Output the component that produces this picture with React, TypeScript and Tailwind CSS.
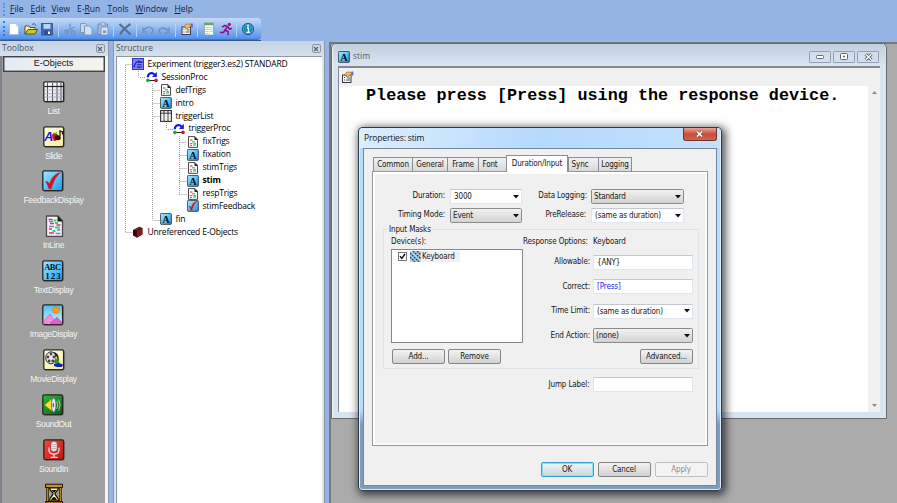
import React from "react";

type IconProps = { size?: number };

/* ---------- object icons ---------- */
function Frame({ fill, children, size = 22 }: { fill: string; children?: React.ReactNode; size?: number }) {
  return (
    <svg width={size} height={size} viewBox="0 0 22 22" className="block shrink-0">
      <defs>
        <linearGradient id="cyan" x1="0" y1="0" x2="1" y2="1"><stop offset="0" stopColor="#a5e8ff" /><stop offset="1" stopColor="#1b9df0" /></linearGradient>
        <linearGradient id="sky" x1="0" y1="0" x2="0" y2="1"><stop offset="0" stopColor="#49bdf2" /><stop offset="1" stopColor="#d8f4ff" /></linearGradient>
        <linearGradient id="cream" x1="0" y1="0" x2="1" y2="1"><stop offset="0" stopColor="#fffde0" /><stop offset="1" stopColor="#f6ef9c" /></linearGradient>
        <linearGradient id="green" x1="0" y1="0" x2="1" y2="1"><stop offset="0" stopColor="#37b53c" /><stop offset="1" stopColor="#0a5f12" /></linearGradient>
        <linearGradient id="red" x1="0" y1="0" x2="1" y2="1"><stop offset="0" stopColor="#f04a42" /><stop offset="1" stopColor="#c01414" /></linearGradient>
        <linearGradient id="pale" x1="0" y1="0" x2="1" y2="1"><stop offset="0" stopColor="#ffffff" /><stop offset="1" stopColor="#d9d9ee" /></linearGradient>
      </defs>
      <rect x="1" y="1" width="20.6" height="20.6" rx="2" fill="#444" opacity=".6" />
      <rect x="0.8" y="0.8" width="19.8" height="19.8" rx="1.6" fill={fill} stroke="#262626" strokeWidth="1.3" />
      {children}
    </svg>
  );
}
const ListIcon = ({ size }: IconProps) => (
  <Frame fill="url(#pale)" size={size}>
    <path d="M4.5 1.5v18.5M9.5 1.5v18.5M14 1.5v18.5M18 1.5v18.5" stroke="#444" strokeWidth=".9" />
    <path d="M1.5 5.5h18.5" stroke="#222" strokeWidth="1.2" />
    <path d="M1.5 9h18.5M1.5 12.5h18.5M1.5 16h18.5" stroke="#a7a7b8" strokeWidth=".8" />
  </Frame>
);
const SmallListIcon = () => (
  <svg width="12" height="12" viewBox="0 0 12 12" className="block shrink-0">
    <rect x=".6" y=".6" width="10.800" height="10.800" fill="#fff" stroke="#2e2e2e" strokeWidth="1.100" />
    <path d="M4 .6v10.800M8 .6v10.800M.6 3.200h10.800" stroke="#333" strokeWidth="1" />
    <path d="M.8 6h10.400M.8 8.700h10.400" stroke="#bbb" strokeWidth=".7" />
  </svg>
);
const SlideIcon = () => (
  <Frame fill="url(#cream)">
    <text x="1.2" y="15.200" fontSize="12.500" fontWeight="bold" fontStyle="italic" fill="#1616e0" fontFamily="Liberation Sans, sans-serif">A</text>
    <path d="M11 7.5c-1.6 0-2.2 1.4-1.8 3.2.3 1.800 1.300 4.300 2.600 4.300s3.500-1.500 3.500-4.200c0-2.500-1.800-3.400-3-2.800z" fill="#d8141c" />
    <path d="M10 6.500l2 1.200 1.500-2.200 0 3h-3z" fill="#119327" />
    <path d="M17 10V5l2.500 1v2.500" fill="none" stroke="#111" strokeWidth="1.200" />
    <ellipse cx="14.800" cy="11.800" rx="3" ry="2.500" fill="#3a0a0a" />
  </Frame>
);
const CheckIcon = ({ size }: IconProps) => (
  <Frame fill="url(#cyan)" size={size}>
    <path d="M3.500 11.500c1.500-.4 2.700.2 4 2.500C9.500 8 12.500 4 18.500 2.500 13.500 7 11.200 12 9.200 18.800H6.800C6 15.500 5 13.500 3.500 11.500z" fill="#e3101a" stroke="#a90d18" strokeWidth=".4" />
  </Frame>
);
const ScriptIcon = () => (
  <svg width="22" height="22" viewBox="0 0 22 22" className="block shrink-0">
    <path d="M3.500 1h11.500l4.500 5v15.500H3.500z" fill="#f4f2fb" stroke="#4a4a4a" strokeWidth="1.300" />
    <path d="M14.500 1l5.500 5.500h-5.500z" fill="#1a1a1a" />
    <path d="M5.500 4.500h4M7 8.500h4M13.500 10h4M6 14h3M6 18h5" stroke="#e0315e" strokeWidth="1.600" />
    <path d="M10.500 5.500h3M12 12.500h5M9.500 16h3M12 8h3" stroke="#35d458" strokeWidth="1.900" />
    <path d="M6 6.500h4M6 11.500h5M14 15h3.500M12.500 18.500h5" stroke="#7282d5" strokeWidth="1.300" />
  </svg>
);
const SmallScriptIcon = () => (
  <svg width="12" height="12" viewBox="0 0 12 12" className="block shrink-0">
    <path d="M1.500.6h6.500l2.500 2.700v8.100h-9z" fill="#fff" stroke="#4a4a4a" strokeWidth="1" />
    <path d="M7.500.4l3.500 3.500H7.500z" fill="#222" />
    <path d="M3 4h2.500M3 9.500h2" stroke="#e06a90" strokeWidth="1.400" />
    <path d="M5 5.800h3M6 9h3" stroke="#4fd274" strokeWidth="1.400" />
    <path d="M2.800 7.500h2.500M6.500 7.500h2.500" stroke="#7a85dc" strokeWidth="1.200" />
  </svg>
);
const TextIcon = () => (
  <Frame fill="url(#cyan)">
    <text x="2.200" y="10" fontSize="8.500" fontWeight="bold" textLength="17" fill="#07131c" fontFamily="Liberation Serif, serif">ABC</text>
    <text x="3.200" y="18.500" fontSize="9" fontWeight="bold" textLength="15.500" fill="#07131c" fontFamily="Liberation Serif, serif">123</text>
  </Frame>
);
const ImageIcon = () => (
  <Frame fill="url(#sky)">
    <circle cx="14" cy="6" r="3.300" fill="#ff9b1c" stroke="#e07000" strokeWidth=".6" />
    <path d="M1.600 19.800v-3L8 10l5.500 8z" fill="#f48be0" stroke="#b44aa8" strokeWidth=".5" />
    <path d="M8 19.800l7-6.500 5 5v1.500z" fill="#e25fd0" stroke="#a43a98" strokeWidth=".5" />
  </Frame>
);
const MovieIcon = () => (
  <Frame fill="url(#cream)">
    <ellipse cx="8" cy="8.800" rx="5.300" ry="6" fill="#e6e6e6" stroke="#333" strokeWidth="1" />
    {[[8, 5], [4.900, 8], [11, 8], [6.200, 12], [9.800, 12]].map(([x, y]) => (
      <circle key={`${x}-${y}`} cx={x} cy={y} r="1.400" fill="#444" />
    ))}
    <path d="M10.500 3c4 .5 5.500 4 5.500 9l-3 3-1.500-3c1.800-3 1.200-6-1-9z" fill="#222" />
    <path d="M12 9.500l3-1 1.500 5.500-4 1z" fill="#25a02d" />
    <path d="M11 15l5-1 4 1.500-1 2.500h-5L11 17z" fill="#1920b5" />
    <path d="M11.500 9l2.500-2v3z" fill="#e8cf29" />
  </Frame>
);
const SoundOutIcon = () => (
  <Frame fill="url(#green)">
    <path d="M2.500 11L10 4.800v12.400z" fill="#ffe32e" stroke="#7d7400" strokeWidth=".5" />
    <ellipse cx="11.700" cy="11" rx="2.300" ry="7" fill="#eeeef8" stroke="#5d5d80" strokeWidth=".8" />
    <ellipse cx="11.400" cy="11" rx=".9" ry="2.500" fill="#6b6ba2" />
    <path d="M14.800 7q2 4 0 8M16.700 5.500q2.800 5.500 0 11" fill="none" stroke="#a7d8ab" strokeWidth=".9" />
  </Frame>
);
const SoundInIcon = () => (
  <Frame fill="url(#red)">
    <rect x="8" y="2.500" width="6" height="10" rx="3" fill="#e9e9e9" stroke="#777" strokeWidth=".5" />
    <path d="M9 5.500h4M9 7.500h4M9 9.500h4" stroke="#999" strokeWidth=".6" />
    <path d="M6 8.500v2.500c0 5.500 10 5.500 10 0V8.500M11 15v3M7.500 18.400h7" fill="none" stroke="#ece4e4" strokeWidth="1.200" />
  </Frame>
);
const WaitIcon = () => (
  <svg width="22" height="22" viewBox="0 0 22 22" className="block">
    <path d="M4.500 3v16M17.500 3v16" stroke="#3a2200" strokeWidth="2.600" />
    <path d="M4.500 3v16M17.500 3v16" stroke="#b98016" strokeWidth="1" />
    <path d="M2.500 1.200h17v3.300h-17z" fill="#c98f22" stroke="#1d1305" />
    <path d="M6.500 4.800h9c0 3-3.500 4-3.500 6s3.500 3 3.500 7h-9c0-4 3.500-5 3.500-7s-3.500-3-3.500-6z" fill="#fff3a1" stroke="#1c1405" strokeWidth="1.300" />
    <path d="M8.500 7h5L11 10zM8 17c1-2 2-3 3-3s2 1 3 3z" fill="#111" />
    <path d="M2.500 18.500h17v2.500h-17z" fill="#a56e12" stroke="#1d1305" />
  </svg>
);
const AIcon = ({ size = 12 }: IconProps) => (
  <Frame fill="url(#cyan)" size={size}>
    <text x="11" y="17.500" textAnchor="middle" fontSize="19" fontWeight="bold" fill="#04121c" fontFamily="Liberation Serif, serif">A</text>
  </Frame>
);
const ProcIcon = () => (
  <svg width="12" height="12" viewBox="0 0 12 12" className="block shrink-0">
    <path d="M1.800 6.200C2 2 6 1 8.600 3.500" fill="none" stroke="#1515ef" strokeWidth="2.100" />
    <path d="M10.800 .8v5.200H6z" fill="#1515ef" />
    <path d="M2 9.500h8" stroke="#222" strokeWidth="1" />
    <circle cx="1.900" cy="9.400" r="1.800" fill="#13b51f" />
    <circle cx="10" cy="9.400" r="1.800" fill="#d3152a" />
  </svg>
);
const ExperimentIcon = () => (
  <svg width="12" height="12" viewBox="0 0 12 12" className="block shrink-0">
    <rect x=".5" y=".5" width="11" height="11" fill="#7d80ee" stroke="#3438c8" />
    <path d="M2 9.500c.5-3.500 2.500-6 5.500-6.500M6.500 4.800c1-1 3-1 4-.3M5.300 6.800h4.200M5 8.800c1.500.8 3.500.6 4.700-.4" fill="none" stroke="#1414b4" strokeWidth="1.100" />
  </svg>
);
const BookIcon = () => (
  <svg width="12" height="12" viewBox="0 0 12 12" className="block shrink-0">
    <path d="M1 4l6-3.300 3.500 1.300v6.500L5 11.800 1 9.500z" fill="#3b0508" />
    <path d="M4.800 4.500L10.200 2v6.500L5 11.300z" fill="#8c141a" />
    <path d="M2 4l5-2.700 1.800.6-4.500 2.300z" fill="#6b3a3a" />
  </svg>
);
const PropsIcon = ({ w = 13 }: { w?: number }) => (
  <svg width={w} height="12" viewBox="0 0 13 12" className="block shrink-0">
    <rect x="1.500" y="4" width="8.500" height="7.500" fill="#fafafa" stroke="#38384c" />
    <path d="M3 6.500h1M3 9h1M5 9h4M6.500 7h2.500" stroke="#4b4b5c" strokeWidth="1.200" />
    <path d="M3 4.500L6 1l4 .2 1 2-3 1.200-1 1.600-1.800.2.300-2z" fill="#f2bd63" stroke="#8a5a24" strokeWidth=".6" />
    <path d="M10.300 .5h2v4h-1.600z" fill="#6464c8" />
  </svg>
);

/* ---------- toolbar ---------- */
const Sep = () => <span className="mx-[3.750px] h-[16px] w-px shrink-0 bg-[#b9cfee]" />;
function Tool({ children }: { children: React.ReactNode }) {
  return <svg width="14" height="14" viewBox="0 0 14 14" className="block shrink-0">{children}</svg>;
}
const Group = ({ children }: { children: React.ReactNode }) => <div className="flex items-center gap-[2.500px]">{children}</div>;

function Toolbar() {
  return (
    <div className="flex h-[22px] w-[261px] items-center rounded-r-[4px] border-b border-[#4473b8] bg-linear-to-b from-[#c5daf6] via-[#8fb8f0] to-[#4f8fea] pl-[3px]">
      <span className="mr-[2px] h-[15px] border-l-2 border-dotted border-[#2f80dd]" />
      <Group>
        <Tool><path d="M2.500 1.500h6.500l2.500 3v8H2.500z" fill="#fff" stroke="#9fafc7" strokeWidth=".6" /><path d="M9 1.500v3h2.500z" fill="#ccd8ea" /></Tool>
        <Tool><path d="M1 12V4h4l1 1.500h5V8" fill="#fff59b" stroke="#555324" /><path d="M1 12l3-4.500h9.500L11 12z" fill="#c8c829" stroke="#555324" /><path d="M8 2.500c2-1.500 3.500-.5 4 1.200" fill="none" stroke="#333" strokeWidth=".7" /></Tool>
        <Tool><rect x="1.500" y="1.500" width="11" height="11.500" fill="#4168ba" stroke="#415a9a" /><path d="M3.500 2h7v4.800h-7z" fill="#bdd3f2" /><path d="M4 8.500h7V13H4z" fill="#344e8e" /><path d="M8 9.500h2V12H8z" fill="#fff" /></Tool>
      </Group>
      <Sep />
      <Group>
        <Tool><path d="M7 1.500v6.500M11.500 5L3 10" stroke="#7e96b8" strokeWidth="1.400" /><circle cx="3.500" cy="10" r="1.800" fill="none" stroke="#768fb3" strokeWidth="1.300" /><circle cx="10" cy="10.500" r="1.800" fill="none" stroke="#768fb3" strokeWidth="1.300" /></Tool>
        <Tool><path d="M1.500 1.500h5L9 4v6.500H1.500z" fill="#c0d5f3" stroke="#8098bd" /><path d="M5.500 4h5L13 6.500V13H5.500z" fill="#d3e0f4" stroke="#8098bd" /></Tool>
        <Tool><path d="M2 2h9.500v10.500H2z" fill="#9ebbe4" stroke="#748db4" /><path d="M5 .8h4v2.400H5z" fill="#d9e7f8" stroke="#748db4" strokeWidth=".7" /><path d="M5 5h7v8H5z" fill="#d3e0f4" stroke="#748db4" strokeWidth=".8" /><path d="M7 8.500h3v2.500H7z" fill="#7697c8" /></Tool>
      </Group>
      <Sep />
      <Tool><path d="M1.500 2l11 10.500M12.500 2c-4 2.500-8 6-10.500 10.500" fill="none" stroke="#566f96" strokeWidth="2.100" /></Tool>
      <Sep />
      <Group>
        <Tool><path d="M2 5.500v4.500h4.500M2.500 9.500c1-4.500 6.500-5.500 9-2.500 1 1.500.5 3.500-1.500 4.500" fill="none" stroke="#7392bf" strokeWidth="1.600" /></Tool>
        <Tool><path d="M12 5.500v5.500H7M11.500 10.500c-1-4.500-6.500-5.500-9-3-.8 1.300-.3 3 1.500 4" fill="none" stroke="#7392bf" strokeWidth="1.600" /></Tool>
      </Group>
      <Sep />
      <PropsIcon w={14} />
      <Sep />
      <Group>
        <Tool><rect x="2.500" y="1" width="9" height="12" fill="#fbfff8" stroke="#7d9f83" strokeWidth=".7" /><path d="M2.500 1h9v2.200h-9z" fill="#5dac50" /><path d="M3.500 5.500h3M7.500 5.500h3M3.500 7.500h3M7.500 7.500h3M3.500 9.500h3M7.500 9.500h3M3.500 11.500h3" stroke="#b1d5a7" /></Tool>
        <Tool><circle cx="10.300" cy="2.300" r="1.600" fill="#8a148f" /><path d="M3 5l3-1.500 3 1.300 1.500 2.200 2.500-.5M8.500 4.800L6 8l3.200 1.800-.2 3.400M6 8l-1.500 2.500H1" fill="none" stroke="#8a148f" strokeWidth="1.600" /></Tool>
      </Group>
      <Sep />
      <Tool><circle cx="7" cy="7" r="5.600" fill="#168bc4" stroke="#13547f" /><circle cx="7" cy="7" r="4.800" fill="none" stroke="#7cc9e8" strokeWidth=".5" /><path d="M6 6h1.500v4.300M5.500 10.400h3.500" fill="none" stroke="#fff" strokeWidth="1.300" /><circle cx="7" cy="3.800" r="1" fill="#fff" /></Tool>
    </div>
  );
}

const menus: [string, string, string, string][] = [
  ["", "F", "ile", "w-[20.500px]"],
  ["", "E", "dit", "w-[21px]"],
  ["", "V", "iew", "w-[25.500px]"],
  ["E-", "R", "un", "w-[30.500px]"],
  ["", "T", "ools", "w-[28px]"],
  ["", "W", "indow", "w-[39px]"],
  ["", "H", "elp", "w-[24px]"],
];

/* ---------- panels ---------- */
function PanelTitle({ children }: { children: React.ReactNode }) {
  return (
    <div className="flex h-[15px] shrink-0 items-center justify-between bg-linear-to-b from-[#c5d3e2] to-[#d6e1ee] pr-[3.500px] pl-[2px] text-[8.500px] text-[#4c525a]">
      <span>{children}</span>
      <span className="flex size-[9px] items-center justify-center rounded-[2px] border border-[#8d97a4]">
        <svg width="6" height="6" viewBox="0 0 6 6" className="shrink-0"><path d="M1 1l4 4M5 1L1 5" stroke="#59636f" strokeWidth="1.200" /></svg>
      </span>
    </div>
  );
}

const toolboxItems: [string, React.ReactNode][] = [
  ["List", <ListIcon />],
  ["Slide", <SlideIcon />],
  ["FeedbackDisplay", <CheckIcon />],
  ["InLine", <ScriptIcon />],
  ["TextDisplay", <TextIcon />],
  ["ImageDisplay", <ImageIcon />],
  ["MovieDisplay", <MovieIcon />],
  ["SoundOut", <SoundOutIcon />],
  ["SoundIn", <SoundInIcon />],
];

function Toolbox() {
  return (
    <div className="flex w-[109px] flex-col border-r border-[#8b97a8] bg-[#f2f5f9]">
      <PanelTitle>Toolbox</PanelTitle>
      <div className="mr-[3px] flex min-h-0 flex-1 flex-col border-l-2 border-[#7c838c] bg-[#a0a0a0]">
        <div className="ml-px flex h-[16px] shrink-0 items-center justify-center border border-[#41454a] bg-linear-to-r from-[#e4ebf4] to-[#f6f4ea] font-['Liberation_Sans',sans-serif] text-[9px] text-[#111] shadow-[inset_0_0_0_0.500px_#55595e]">
          <span className="pr-px">E-Objects</span>
        </div>
        <div className="flex flex-col items-center pt-[9px]">
          {toolboxItems.map(([name, icon]) => (
            <div key={name} className="flex h-[44.700px] shrink-0 flex-col items-center">
              {icon}
              <span className="mt-[2px] font-['Liberation_Sans',sans-serif] text-[8.500px] leading-[12px] tracking-[-0.350px] text-[#f4f4f4]">{name}</span>
            </div>
          ))}
          <WaitIcon />
        </div>
      </div>
    </div>
  );
}

const tree: [string, string, React.ReactNode][] = [
  ["pl-[15px]", "Experiment (trigger3.es2) STANDARD", <ExperimentIcon />],
  ["pl-[29px]", "SessionProc", <ProcIcon />],
  ["pl-[43px]", "defTrigs", <SmallScriptIcon />],
  ["pl-[43px]", "intro", <AIcon />],
  ["pl-[43px]", "triggerList", <SmallListIcon />],
  ["pl-[56px]", "triggerProc", <ProcIcon />],
  ["pl-[70px]", "fixTrigs", <SmallScriptIcon />],
  ["pl-[70px]", "fixation", <AIcon />],
  ["pl-[70px]", "stimTrigs", <SmallScriptIcon />],
  ["pl-[70px]", "stim", <AIcon />],
  ["pl-[70px]", "respTrigs", <SmallScriptIcon />],
  ["pl-[70px]", "stimFeedback", <CheckIcon size={12} />],
  ["pl-[43px]", "fin", <AIcon />],
  ["pl-[15px]", "Unreferenced E-Objects", <BookIcon />],
];

function Structure() {
  return (
    <div className="ml-1 flex w-[212px] flex-col border-x border-[#8b97a8] bg-[#dbe5f1]">
      <PanelTitle>Structure</PanelTitle>
      <div className="relative mx-[2px] min-h-0 flex-1 border-t border-l border-[#8f98a3] bg-white pt-[0.500px]">
        <svg width="100" height="200" className="absolute top-0 left-0" fill="none" stroke="#a0a0a0" strokeDasharray="1 1">
          <path d="M8.500 8v168M8.500 7.500h7M21.500 14v6.500h7M35.500 27v136M35.500 33.500h7M35.500 46.500h7M35.500 59.500h7M35.500 163.500h7M49.500 66v6.500h7M62.500 79v59M62.500 85.500h7M62.500 98.500h7M62.500 111.500h7M62.500 124.500h7M62.500 137.500h7M8.500 175.500h7" />
        </svg>
        {tree.map(([indent, name, icon]) => (
          <div key={name} className={`relative flex h-[12.960px] items-center gap-[3.500px] text-[8.500px] tracking-[-0.180px] whitespace-nowrap text-black ${indent} ${name === "stim" ? "font-bold" : ""}`}>
            {icon}
            <span className="leading-none">{name}</span>
          </div>
        ))}
      </div>
    </div>
  );
}

/* ---------- dialog controls ---------- */
const Arrow = () => <svg width="6" height="4" viewBox="0 0 6 4" className="mr-[2px]"><path d="M0 0h6L3 3.600z" fill="#111" /></svg>;

function Field({ label, value, kind, width, labelClass, valueClass = "" }: { label: string; value: string; kind: "edit" | "combo" | "drop"; width: string; labelClass: string; valueClass?: string }) {
  const skin =
    kind === "drop"
      ? "rounded-[1.500px] border-[#8b8b8b] bg-linear-to-b from-[#f1f1f1] to-[#d3d3d3] pl-[2px]"
      : "border-[#e1e5ec] border-t-[#c3c7cf] bg-white pl-[3px]";
  return (
    <div className="flex items-center justify-end">
      <span className={labelClass}>{label}</span>
      <div className={`flex h-[15px] items-center justify-between border ${width} ${skin}`}>
        <span className={`pt-px ${valueClass}`}>{value}</span>
        {kind !== "edit" && <Arrow />}
      </div>
    </div>
  );
}

function Button({ children, tone = "normal" }: { children: React.ReactNode; tone?: "normal" | "default" | "disabled" }) {
  const skin = {
    normal: "border-[#858585] bg-linear-to-b from-[#f3f3f3] to-[#d2d2d2]",
    default: "border-[#36a0d0] bg-linear-to-b from-[#eef5f9] to-[#ccd8de] shadow-[inset_0_0_0_1px_#8fdcf5]",
    disabled: "border-[#bfc1c3] bg-[#f3f3f3] text-[#8c8c8c]",
  }[tone];
  return <div className={`flex h-[15px] w-[53px] items-center justify-center rounded-[2px] border ${skin}`}>{children}</div>;
}

const tabs: [string, string][] = [
  ["Common", "w-[39px]"],
  ["General", "w-[35px]"],
  ["Frame", "w-[31px]"],
  ["Font", "w-[28px] pr-[5px]"],
  ["Duration/Input", "w-[62px]"],
  ["Sync", "w-[30px] pr-[7px]"],
  ["Logging", "w-[34px]"],
];

function Dialog() {
  return (
    <div className="absolute top-[127px] left-[358px] flex h-[364px] w-[363.500px] flex-col rounded-[4px] border-[1.500px] border-[#2f3c49] bg-linear-to-b from-[#b7dbfe] from-78% to-[#7e9dbc] to-82% px-[4px] pb-[4px] font-['DejaVu_Sans_Condensed','DejaVu_Sans',sans-serif] text-[8px] leading-none tracking-[-0.130px] text-[#161616] shadow-[2px_2px_9px_2px_rgba(0,0,0,0.65),inset_0_0_0_1px_#dcefff]">
      <div className="-mx-[3px] flex h-[20px] shrink-0 items-start justify-between rounded-t-[3px] bg-linear-to-r from-[#ddeefd] via-[#b5d9fe] to-[#c4e1fd] pr-[3px] pl-[4px]">
        <span className="pt-[6px] font-['Open_Sans',sans-serif] text-[8.500px] leading-none tracking-[-0.150px]">Properties: stim</span>
        <span className="flex h-[13px] w-[34px] items-center justify-center rounded-b-[3px] border border-t-0 border-[#6d3530] bg-linear-to-b from-[#e7a59a] via-[#c84c38] to-[#d5634d]">
          <svg width="9" height="8" viewBox="0 0 9 8"><path d="M2 1.500l5 5M7 1.500l-5 5" stroke="#6b5555" strokeWidth="3" /><path d="M2 1.500l5 5M7 1.500l-5 5" stroke="#fff" strokeWidth="1.700" /></svg>
        </span>
      </div>
      <div className="flex min-h-0 flex-1 flex-col border border-[#72879b] bg-[#f0f0f0] px-[8px] pt-[6px]">
        <div className="flex h-[16px] items-end pl-px">
          {tabs.map(([name, width]) => (
            <div
              key={name}
              className={`flex items-center justify-center border-t border-l border-[#8c8e94] ${width} ${
                name === "Duration/Input" ? "relative z-10 -mb-px h-[17px] border-r bg-white" : "h-[14px] bg-linear-to-b from-[#f2f2f2] to-[#d8d8d8] pt-px"
              } ${name === "Logging" ? "border-r" : ""}`}
            >
              {name}
            </div>
          ))}
        </div>
        <div className="flex h-[275px] flex-col border border-[#9699a0] bg-[#f0f0f0] pr-[14px] pl-[10px] shadow-[inset_2px_2px_0_#fff,inset_-2px_-2px_0_#fbfbfb]">
          <div className="flex pt-[17px]">
            <div className="flex w-[139px] flex-col gap-[4px]">
              <Field label="Duration:" value="3000" kind="combo" width="w-[72px]" labelClass="mr-[5px] pb-px" />
              <Field label="Timing Mode:" value="Event" kind="drop" width="w-[72px]" labelClass="mr-[5px] pb-px" />
            </div>
            <div className="flex w-[162px] flex-col gap-[4px]">
              <Field label="Data Logging:" value="Standard" kind="drop" width="w-[93px]" labelClass="mr-[4px] pb-px" />
              <Field label="PreRelease:" value="(same as duration)" kind="combo" width="w-[93px]" labelClass="mr-[5px] pb-px" />
            </div>
          </div>
          <div className="mt-[6px] -mr-[6px] flex h-[140px] border border-[#dce4ea] pl-[7px]">
            <div className="flex w-[132px] flex-col">
              <span className="-mt-[4px] -ml-[3px] w-fit bg-[#f0f0f0] px-px">Input Masks</span>
              <span className="mt-[4px]">Device(s):</span>
              <div className="mt-[3px] h-[94px] border border-[#828790] bg-white pt-px pl-[6px]">
                <div className="flex items-center">
                  <svg width="9" height="9" viewBox="0 0 9 9"><rect x=".5" y=".5" width="8" height="8" fill="#fff" stroke="#777" /><path d="M2 4.300l1.800 2L7 2" fill="none" stroke="#111" strokeWidth="1.400" /></svg>
                  <svg width="11" height="11" viewBox="0 0 11 11" className="ml-[3px]"><rect width="11" height="11" fill="#bcd4e9" /><path d="M0 2l9 9M0 6l5 5M3 0l8 8M7 0l4 4" stroke="#24527f" strokeWidth="1.600" strokeDasharray="2 .8" /></svg>
                  <span className="flex h-[11px] w-[39px] items-center bg-[#f0f0f0] pt-px pl-px">Keyboard</span>
                </div>
              </div>
              <div className="mt-[6px] ml-px flex gap-[3px]">
                <Button>Add...</Button>
                <Button>Remove</Button>
              </div>
            </div>
            <div className="flex w-[170px] flex-col pt-[8px]">
              <div className="flex gap-[5px]"><span className="w-[65px] whitespace-nowrap">Response Options:</span><span>Keyboard</span></div>
              <div className="mt-[8.500px] flex flex-col gap-[9.500px]">
                <Field label="Allowable:" value="{ANY}" kind="edit" width="w-[100px]" labelClass="mr-[3px]" />
                <Field label="Correct:" value="[Press]" kind="edit" width="w-[100px]" labelClass="mr-[3px]" valueClass="text-[#1c1ce0]" />
                <Field label="Time Limit:" value="(same as duration)" kind="combo" width="w-[100px]" labelClass="mr-[3px]" />
                <Field label="End Action:" value="(none)" kind="drop" width="w-[100px]" labelClass="mr-[3px]" />
              </div>
              <div className="mt-[6px] flex justify-end"><Button>Advanced...</Button></div>
            </div>
          </div>
          <div className="mt-[8px]">
            <Field label="Jump Label:" value="" kind="edit" width="w-[100px]" labelClass="mr-[3px]" />
          </div>
        </div>
        <div className="mt-[16px] flex justify-end gap-[4px]">
          <Button tone="default">OK</Button>
          <Button>Cancel</Button>
          <Button tone="disabled">Apply</Button>
        </div>
      </div>
    </div>
  );
}

function StimWindow() {
  const caption = "flex h-[12px] w-[22px] items-center justify-center rounded-[1px] border border-[#92a1b3] bg-[#d2deea]";
  return (
    <div className="absolute top-[43px] left-[331px] flex h-[376px] w-[556px] flex-col rounded-t-[5px] border border-[#656a71] bg-[#d7e4f2] px-[6px] pb-[6px] shadow-[inset_1px_1px_0_#eef4fa]">
      <div className="-mx-[5px] flex h-[22px] shrink-0 items-center rounded-t-[4px] bg-linear-to-b from-[#c0cfde] to-[#d9e5f1] pt-[3px] pr-[6px] pl-[5px]">
        <AIcon size={12} />
        <span className="ml-[3px] flex-1 text-[8.500px] text-[#5a6068]">stim</span>
        <div className="flex gap-[2px]">
          <span className={caption}><svg width="8" height="4"><rect x=".5" y=".5" width="7" height="3" rx="1" fill="#fff" stroke="#606a75" /></svg></span>
          <span className={caption}><svg width="8" height="7"><rect x=".5" y=".5" width="7" height="6" rx="1" fill="#fff" stroke="#606a75" /><path d="M3 3.500h2" stroke="#606a75" strokeWidth="1.500" /></svg></span>
          <span className={caption}><svg width="9" height="8" viewBox="0 0 8 7"><path d="M1.500 1l5 5M6.500 1l-5 5" stroke="#56606b" strokeWidth="2.800" /><path d="M1.500 1l5 5M6.500 1l-5 5" stroke="#fff" strokeWidth="1.200" /></svg></span>
        </div>
      </div>
      <div className="flex min-h-0 flex-1 flex-col border-t-2 border-l border-[#85888c] bg-white">
        <div className="flex h-[18px] items-center bg-[#f0f0f0] pb-px pl-[2px]"><PropsIcon /></div>
        <div className="flex min-h-0 flex-1">
          <div className="flex-1 pl-[27px] font-['Liberation_Mono',monospace] text-[16.800px] leading-[20px] font-bold whitespace-nowrap text-black">
            Please press [Press] using the response device.
          </div>
          <div className="flex w-[12px] shrink-0 flex-col items-center justify-between bg-[#f0f0f0] py-[5px]">
            <svg width="5" height="3"><path d="M0 3h5L2.500 0z" fill="#8b8b8b" /></svg>
            <svg width="5" height="3"><path d="M0 0h5L2.500 3z" fill="#8b8b8b" /></svg>
          </div>
        </div>
      </div>
    </div>
  );
}

export default function App() {
  return (
    <div className="relative flex h-[503px] w-[897px] flex-col overflow-hidden bg-[#95b4e6] font-['Open_Sans','Noto_Sans',sans-serif]">
      <div className="flex h-[18px] shrink-0 items-center pl-[3px] text-[8.500px] font-medium text-[#111d33]">
        <span className="mr-[5px] h-[13px] border-l-2 border-dotted border-[#5b95e0]" />
        {menus.map(([pre, key, post, width]) => (
          <span key={key} className={width}>{pre}<u>{key}</u>{post}</span>
        ))}
      </div>
      <Toolbar />
      <div className="h-px w-[261px] bg-[#38588e]" />
      <div className="flex min-h-0 flex-1">
        <Toolbox />
        <Structure />
        <div className="mt-px ml-[4px] flex-1 border-t-2 border-l-2 border-[#77797c] bg-[#ababab]" />
      </div>
      <StimWindow />
      <Dialog />
    </div>
  );
}
